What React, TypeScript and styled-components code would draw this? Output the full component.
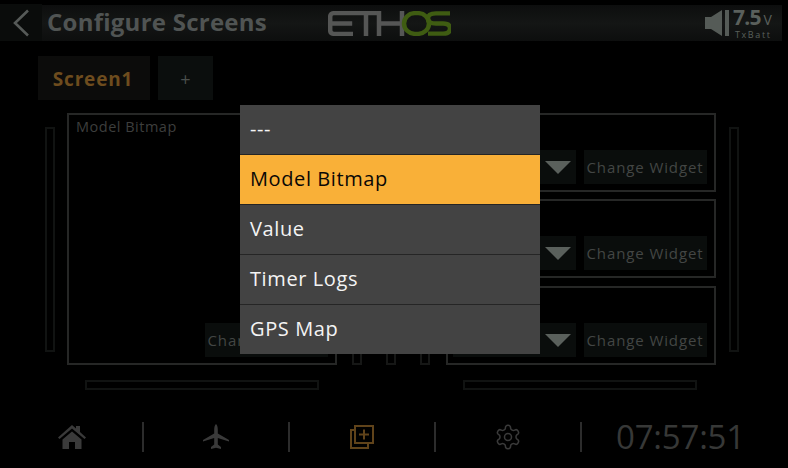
import styled, { createGlobalStyle } from 'styled-components';

const GlobalStyle = createGlobalStyle`
  html, body {
    margin: 0;
    padding: 0;
    background: #000;
  }
  * {
    box-sizing: border-box;
  }
`;

const font = `'Open Sans', 'Noto Sans', sans-serif`;

const Screen = styled.div`
  position: relative;
  width: 788px;
  height: 468px;
  overflow: hidden;
  background: #000;
  font-family: ${font};
  display: flex;
  flex-direction: column;
`;

const Header = styled.header`
  width: 782px;
  height: 36px;
  margin-top: 5px;
  background: linear-gradient(#0d0e0e, #141615 50%, #0d0e0e);
  display: flex;
  align-items: center;
`;

const BackButton = styled.div`
  width: 42px;
  height: 37px;
  margin-top: -1px;
  background: #0a0c0b;
  display: flex;
  align-items: center;
  justify-content: center;
  flex: none;
`;

const Title = styled.h1`
  margin: -2px 0 0 5px;
  width: 281px;
  font-size: 24px;
  line-height: 30px;
  font-weight: 700;
  letter-spacing: 0.25px;
  color: #505453;
  white-space: nowrap;
  flex: none;
`;

const Logo = styled.svg`
  width: 123px;
  height: 25px;
  flex: none;
  margin-top: 1px;
`;

const Battery = styled.div`
  margin-left: auto;
  margin-right: 12px;
  display: flex;
  align-items: center;
  gap: 4px;
`;

const Speaker = styled.svg`
  width: 24px;
  height: 26px;
`;

const Reading = styled.div`
  width: 37px;
  display: flex;
  flex-direction: column;
  align-items: flex-start;
  color: #5a605c;
`;

const Volts = styled.div`
  font-size: 21px;
  line-height: 20px;
  font-weight: 700;
  letter-spacing: -0.8px;
  white-space: nowrap;
  span {
    font-size: 14px;
    font-weight: 400;
    margin-left: 3px;
    letter-spacing: 0;
  }
`;

const BattLabel = styled.div`
  font-size: 9px;
  line-height: 10px;
  letter-spacing: 1.6px;
  margin-left: 2px;
  white-space: nowrap;
`;

const Tabs = styled.nav`
  display: flex;
  gap: 8px;
  margin: 15px 0 0 38px;
  height: 44px;
`;

const Tab = styled.div<{ $wide?: boolean }>`
  width: ${(p) => (p.$wide ? 112 : 55)}px;
  padding: 2px ${(p) => (p.$wide ? 2 : 0)}px 0 0;
  background: ${(p) => (p.$wide ? '#0c0c0b' : '#0b0e0d')};
  color: ${(p) => (p.$wide ? '#6e4c1e' : '#4a4e4c')};
  font-size: ${(p) => (p.$wide ? 19 : 18)}px;
  font-weight: ${(p) => (p.$wide ? 700 : 400)};
  letter-spacing: ${(p) => (p.$wide ? 0.8 : 0)}px;
  display: flex;
  align-items: center;
  justify-content: center;
`;

const Workspace = styled.main`
  display: flex;
  margin: 13px 0 0 45px;
  height: 252px;
`;

const VTrack = styled.div`
  width: 10px;
  height: 225px;
  margin-top: 14px;
  border: 2px solid #111312;
  flex: none;
`;

const Panel = styled.section<{ $tall?: boolean }>`
  position: relative;
  width: 270px;
  height: ${(p) => (p.$tall ? 252 : 79)}px;
  border: 2px solid #262726;
  display: flex;
  align-items: flex-end;
  justify-content: flex-end;
  padding: 0 7px 6px 0;
  flex: none;
`;

const PanelLabel = styled.span`
  position: absolute;
  left: 7px;
  top: 2px;
  font-size: 14.5px;
  line-height: 20px;
  letter-spacing: 0.5px;
  color: #3d3e3d;
`;

const LeftPanel = styled(Panel)`
  margin-left: 12px;
`;

const MiddleTracks = styled.div`
  display: flex;
  gap: 24px;
  margin-left: 15px;
  width: 94px;
  flex: none;
`;

const MiniTrack = styled.div`
  width: 10px;
  height: 252px;
  border-bottom: 2px solid #161716;
  border-left: 2px solid #161716;
  border-right: 2px solid #161716;
`;

const RightColumn = styled.div`
  display: flex;
  flex-direction: column;
  gap: 7px;
  flex: none;
  & > :last-child {
    margin-top: 1px;
  }
`;

const ControlRow = styled.div`
  display: flex;
  gap: 8px;
`;

const Dropdown = styled.div`
  width: 123px;
  height: 34px;
  background: #0a0d0c;
  display: flex;
  align-items: center;
  justify-content: flex-end;
  padding-right: 5px;
`;

const Arrow = styled.div`
  width: 0;
  height: 0;
  border-left: 13px solid transparent;
  border-right: 13px solid transparent;
  border-top: 13px solid #5a605c;
`;

const ChangeButton = styled.div`
  width: 123px;
  height: 34px;
  padding-right: 1px;
  background: #0a0d0c;
  color: #434644;
  font-size: 15px;
  letter-spacing: 0.9px;
  white-space: nowrap;
  display: flex;
  align-items: center;
  justify-content: center;
`;

const RightTrack = styled(VTrack)`
  margin-left: 13px;
`;

const HTracks = styled.div`
  display: flex;
  gap: 144px;
  margin: 15px 0 0 85px;
`;

const HTrack = styled.div`
  width: 234px;
  height: 10px;
  border: 2px solid #111312;
`;

const Footer = styled.footer`
  display: flex;
  align-items: center;
  margin-top: 32px;
  height: 30px;
`;

const FooterIcon = styled.div`
  width: 146px;
  height: 30px;
  display: flex;
  align-items: center;
  justify-content: center;
  flex: none;
  &:first-child {
    width: 143px;
  }
`;

const Divider = styled.div`
  width: 2px;
  height: 30px;
  margin: 0 -1px;
  background: #2c2c2c;
  flex: none;
`;

const Clock = styled.div`
  margin-left: 35px;
  font-size: 33px;
  line-height: 30px;
  letter-spacing: -0.2px;
  color: #373837;
  white-space: nowrap;
`;

const Menu = styled.ul`
  position: absolute;
  left: 240px;
  top: 105px;
  width: 300px;
  margin: 0;
  padding: 0;
  list-style: none;
  background: #434343;
`;

const MenuItem = styled.li<{ $active?: boolean }>`
  height: 50px;
  padding: 0 0 3px 10px;
  display: flex;
  align-items: center;
  font-size: 20px;
  letter-spacing: 0.6px;
  color: ${(p) => (p.$active ? '#0a0806' : '#f4f4f4')};
  background: ${(p) => (p.$active ? '#f9b038' : 'transparent')};
  border-bottom: 1px solid #252525;
  &:last-child {
    height: 49px;
    border-bottom: none;
  }
`;

const menuItems = ['---', 'Model Bitmap', 'Value', 'Timer Logs', 'GPS Map'];

const WidgetControls = () => (
  <ControlRow>
    <Dropdown>
      <Arrow />
    </Dropdown>
    <ChangeButton>Change Widget</ChangeButton>
  </ControlRow>
);

export default function App() {
  return (
    <>
      <GlobalStyle />
      <Screen>
        <Header>
          <BackButton>
            <svg width="18" height="28" viewBox="0 0 18 28">
              <path d="M16 1.5 3 14l13 12.5" fill="none" stroke="#565a58" strokeWidth="2.6" />
            </svg>
          </BackButton>
          <Title>Configure Screens</Title>
          <Logo viewBox="0 0 123 26" preserveAspectRatio="none">
            <g fill="none" stroke="#555655" strokeWidth="4.5">
              <path d="M25 2.200H6Q2.200 2.200 2.200 6v14q0 3.800 3.800 3.800h19M2.200 13h22" />
              <path d="M25 2.200h26M38 2.200v23.800" />
              <path d="M51 0v26M74 0v26M51 13h23" />
            </g>
            <g fill="none" stroke="#3f5c12" strokeWidth="4.500">
              <rect x="76" y="2.200" width="25" height="21.600" rx="10.800" />
              <path d="M122 2.500h-14q-8 0-8 5.250t8 5.250h7q7 0 7 5.250t-7 5.250h-15" />
            </g>
          </Logo>
          <Battery>
            <Speaker viewBox="0 0 24 26">
              <path d="M0 7h6l11-7v26L6 19H0z" fill="#555b57" />
              <rect x="20" y="0" width="4" height="26" fill="#555b57" />
            </Speaker>
            <Reading>
              <Volts>
                7.5<span>V</span>
              </Volts>
              <BattLabel>TxBatt</BattLabel>
            </Reading>
          </Battery>
        </Header>

        <Tabs>
          <Tab $wide>Screen1</Tab>
          <Tab>+</Tab>
        </Tabs>

        <Workspace>
          <VTrack />
          <LeftPanel $tall>
            <PanelLabel>Model Bitmap</PanelLabel>
            <ChangeButton>Change Widget</ChangeButton>
          </LeftPanel>
          <MiddleTracks>
            <MiniTrack />
            <MiniTrack />
            <MiniTrack />
          </MiddleTracks>
          <RightColumn>
            <Panel>
              <WidgetControls />
            </Panel>
            <Panel>
              <WidgetControls />
            </Panel>
            <Panel>
              <WidgetControls />
            </Panel>
          </RightColumn>
          <RightTrack />
        </Workspace>

        <HTracks>
          <HTrack />
          <HTrack />
        </HTracks>

        <Footer>
          <FooterIcon>
            <svg width="28" height="26" viewBox="0 0 28 26">
              <path
                d="M14 1 18 4.500V2h4v6l6 5.500-1.500 1.500L14 4.500 1.500 15 0 13.500zM4.500 15.500 14 7.500l9.500 8V25h-6.500v-7h-6v7H4.500z"
                fill="#3a3a3a"
              />
            </svg>
          </FooterIcon>
          <Divider />
          <FooterIcon>
            <svg width="26" height="26" viewBox="0 0 26 26">
              <path
                d="M13 0q1.800 1.500 1.800 6v3.500L26 16v1.500l-11.200-3.500v6.500l3.200 2.500V25l-5-1.200L8 25v-2l3.200-2.500V14L0 17.500V16l11.200-6.500V6Q11.200 1.500 13 0z"
                fill="#3a3a3a"
              />
            </svg>
          </FooterIcon>
          <Divider />
          <FooterIcon>
            <svg width="24" height="24" viewBox="0 0 24 24" fill="none" stroke="#60431a" strokeWidth="2">
              <rect x="5" y="1" width="18" height="17" />
              <path d="M14 4.500v10M9 9.500h10" />
              <path d="M5 5H1v18h17v-5" />
            </svg>
          </FooterIcon>
          <Divider />
          <FooterIcon>
            <svg width="28" height="28" viewBox="0 0 24 24" fill="none" stroke="#3a3a3a" strokeWidth="1.3">
              <path d="M12.220 2h-.44a2 2 0 0 0-2 2v.18a2 2 0 0 1-1 1.730l-.43.250a2 2 0 0 1-2 0l-.15-.080a2 2 0 0 0-2.730.730l-.22.380a2 2 0 0 0 .730 2.730l.15.100a2 2 0 0 1 1 1.720v.510a2 2 0 0 1-1 1.740l-.15.090a2 2 0 0 0-.730 2.730l.22.380a2 2 0 0 0 2.730.730l.15-.080a2 2 0 0 1 2 0l.43.250a2 2 0 0 1 1 1.730V20a2 2 0 0 0 2 2h.44a2 2 0 0 0 2-2v-.18a2 2 0 0 1 1-1.730l.43-.250a2 2 0 0 1 2 0l.15.080a2 2 0 0 0 2.730-.730l.22-.390a2 2 0 0 0-.730-2.730l-.15-.080a2 2 0 0 1-1-1.740v-.500a2 2 0 0 1 1-1.740l.15-.090a2 2 0 0 0 .730-2.730l-.22-.380a2 2 0 0 0-2.730-.730l-.15.080a2 2 0 0 1-2 0l-.43-.250a2 2 0 0 1-1-1.730V4a2 2 0 0 0-2-2z" />
              <circle cx="12" cy="12" r="3" />
            </svg>
          </FooterIcon>
          <Divider />
          <Clock>07:57:51</Clock>
        </Footer>

        <Menu>
          {menuItems.map((item) => (
            <MenuItem key={item} $active={item === 'Model Bitmap'}>
              {item}
            </MenuItem>
          ))}
        </Menu>
      </Screen>
    </>
  );
}
